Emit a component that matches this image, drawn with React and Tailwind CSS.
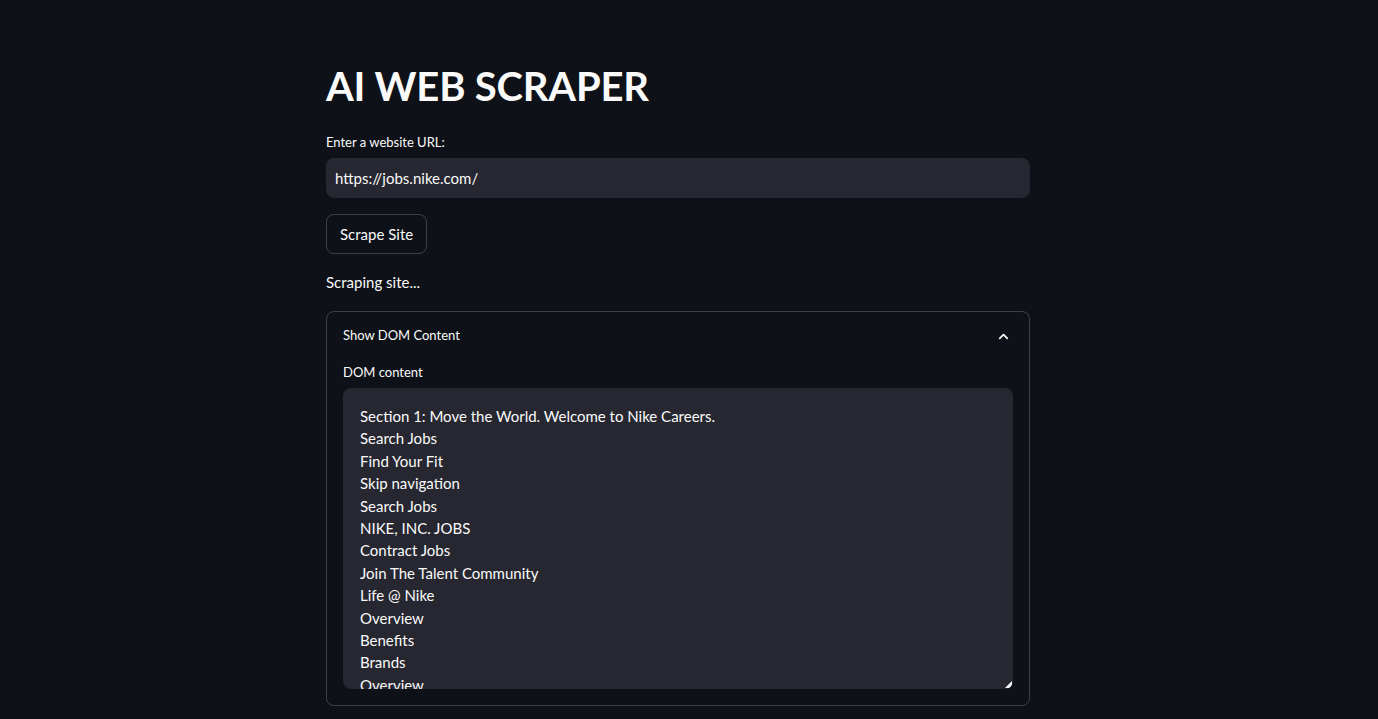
import { ChevronUp } from 'lucide-react';

const lines = [
  'Section 1: Move the World. Welcome to Nike Careers.',
  'Search Jobs',
  'Find Your Fit',
  'Skip navigation',
  'Search Jobs',
  'NIKE, INC. JOBS',
  'Contract Jobs',
  'Join The Talent Community',
  'Life @ Nike',
  'Overview',
  'Benefits',
  'Brands',
  'Overview',
  'Purpose',
];

export default function App() {
  return (
    <div
      className="min-h-screen bg-[#0e1117] pr-[22px] text-[#fafafa]"
      style={{ fontFamily: 'Lato, "Noto Sans", sans-serif' }}
    >
      <div className="mx-auto w-[704px] pt-[59px]">
        <h1 className="py-[3px] text-[40px] font-bold leading-[1.2] tracking-[-0.2px]">AI WEB SCRAPER</h1>

        <label className="mt-[19px] block text-[13px] leading-[20px]">Enter a website URL:</label>
        <div className="mt-[6px] flex h-[40px] items-center rounded-[8px] bg-[#262730] px-[9px] text-[15px]">
          https://jobs.nike.com/
        </div>

        <button className="mt-[16px] h-[40px] rounded-[8px] border border-[rgba(250,250,250,0.2)] px-[13px] text-[15px]">
          Scrape Site
        </button>

        <p className="mt-[16px] text-[15px] leading-[24px]">Scraping site...</p>

        <div className="mt-[17px] rounded-[8px] border border-[rgba(250,250,250,0.2)] px-[16px] pb-[16px]">
          <div className="flex h-[46px] items-center justify-between pt-[2px]">
            <span className="text-[13px]">Show DOM Content</span>
            <ChevronUp size={15} strokeWidth={2.75} className="mr-[2px]" />
          </div>
          <div className="pt-[4px] text-[13px] leading-[20px]">DOM content</div>
          <div className="relative mt-[6px] h-[301px] overflow-hidden rounded-[8px] bg-[#262730] px-[17px] pt-[17px]">
            {lines.map((l, i) => (
              <div key={i} className="text-[15px] leading-[22.4px]">
                {l}
              </div>
            ))}
            <svg className="absolute bottom-[1px] right-[1px]" width="7" height="7" viewBox="0 0 7 7">
              <path d="M7 0 L7 7 L0 7 Z" fill="#fafafa" />
            </svg>
          </div>
        </div>
      </div>
    </div>
  );
}
